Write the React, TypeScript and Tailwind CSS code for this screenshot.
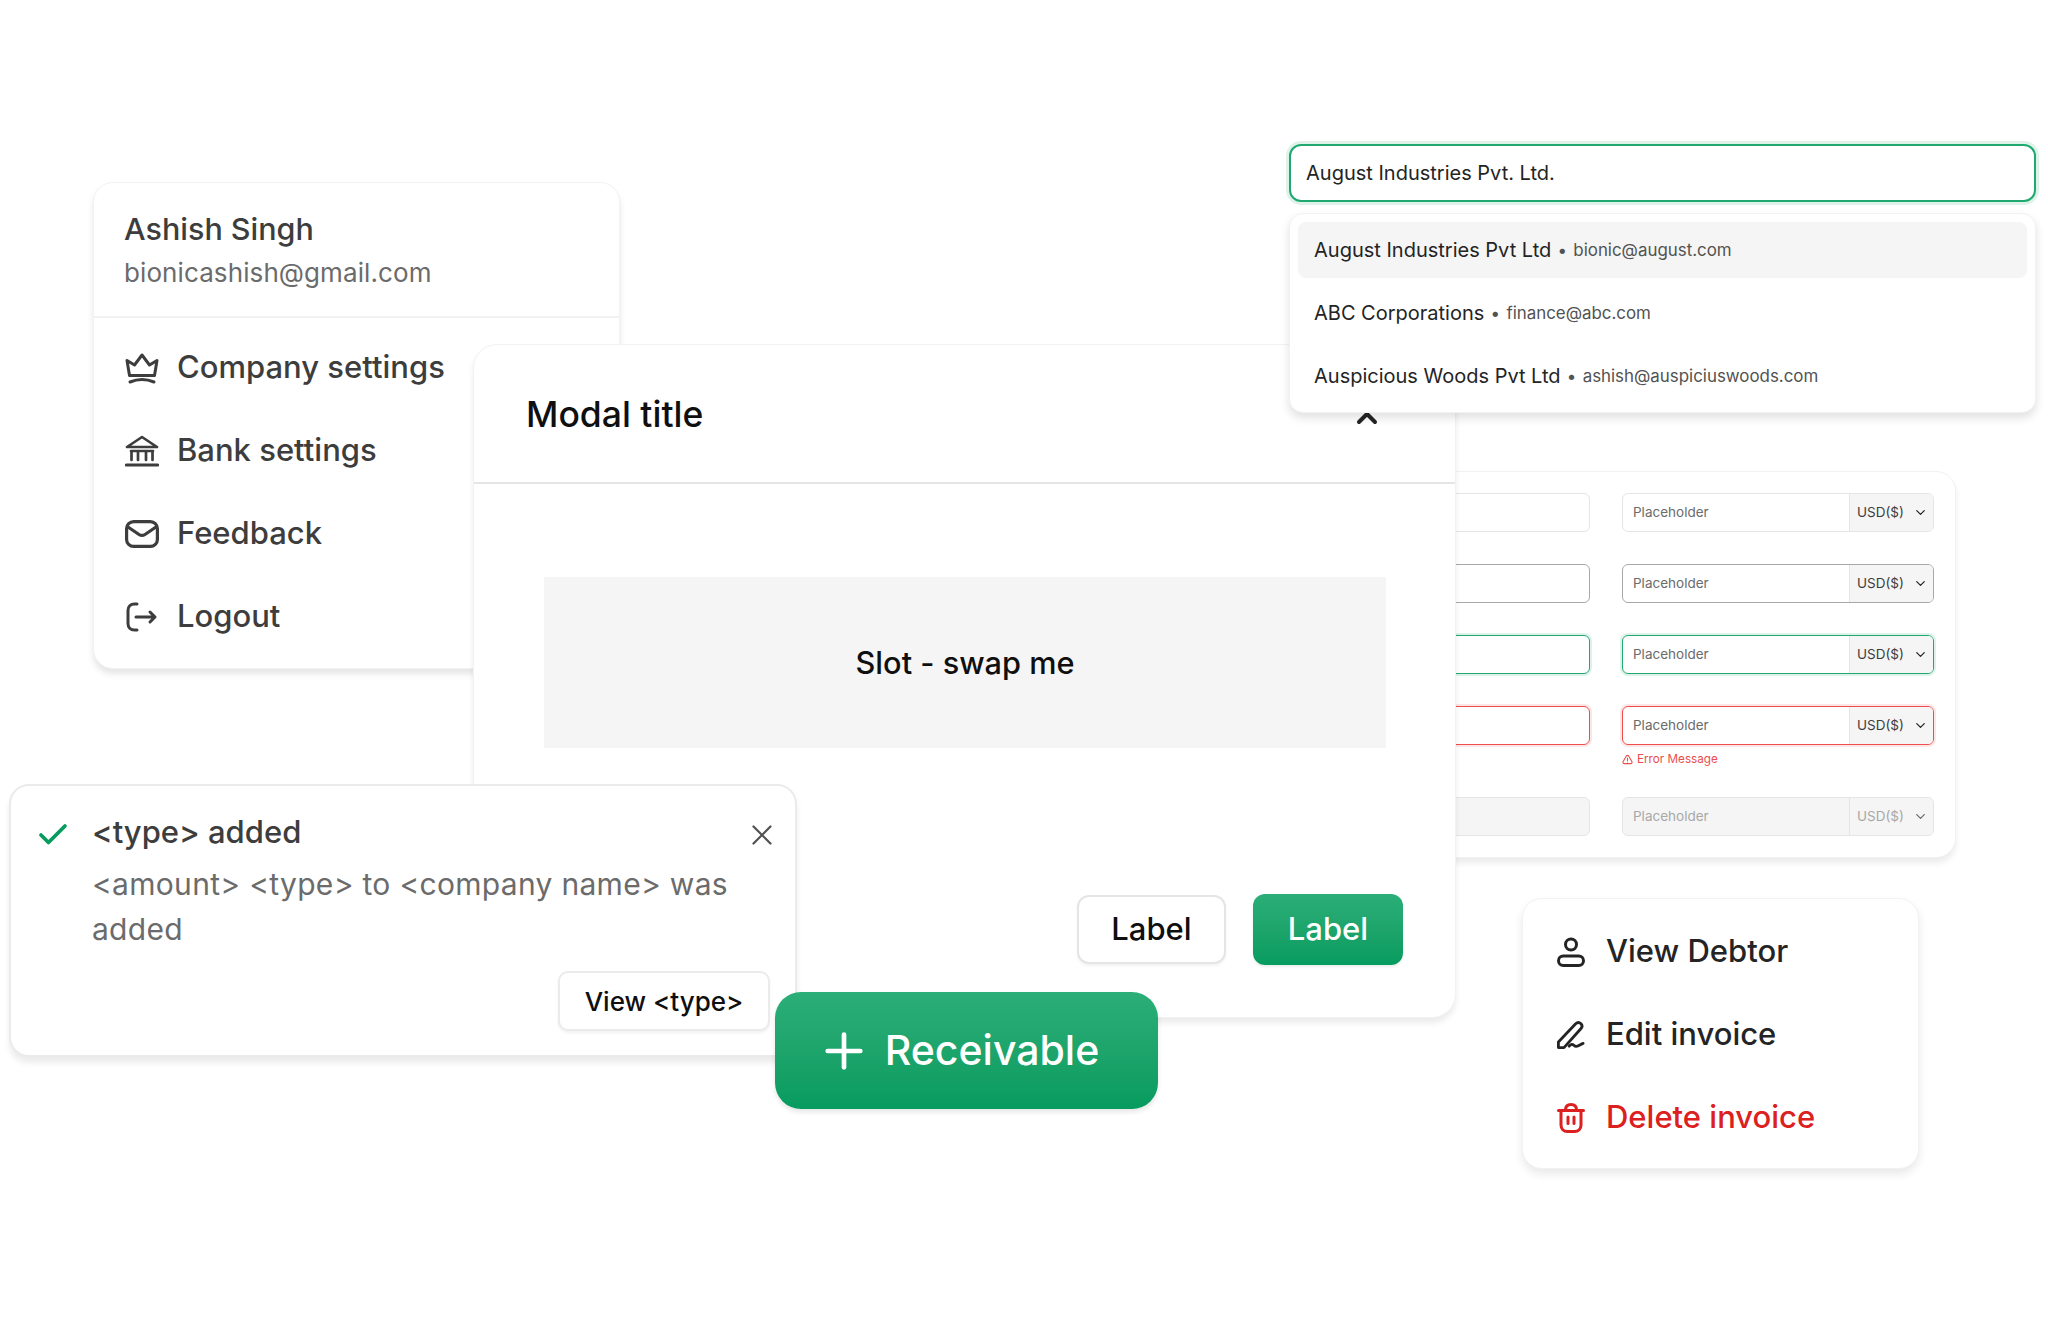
import { X, Plus, Check, ChevronDown, ChevronUp } from "lucide-react";

type FieldState = "idle" | "hover" | "focus" | "error" | "disabled";

const fieldBorder: Record<FieldState, string> = {
  idle: "border-[#e5e5e5]",
  hover: "border-[#a8a8a8]",
  focus: "border-[#1fa971] shadow-[0_0_0_2px_rgba(31,169,113,0.15)]",
  error: "border-[#ec4e4e] shadow-[0_0_0_2px_rgba(236,78,78,0.15)]",
  disabled: "border-[#e5e5e5] bg-[#f5f5f5]",
};

const fieldRows: FieldState[] = ["idle", "hover", "focus", "error", "disabled"];

function CrownIcon() {
  return (
    <svg width="34" height="32" viewBox="0 0 34 32" fill="none" stroke="#3d3d3d" strokeWidth="3" strokeLinejoin="round" strokeLinecap="round">
      <path d="M2 8.500 9.500 13 17 3l7.500 10L32 8.500 29.500 23.500h-25L2 8.500Z" />
      <path d="M5 30c7.500-3.200 16.500-3.200 24 0" />
    </svg>
  );
}

function BankIcon() {
  return (
    <svg width="34" height="32" viewBox="0 0 34 32" fill="none" stroke="#3d3d3d" strokeWidth="2.700" strokeLinecap="round" strokeLinejoin="round">
      <path d="M2 12 17 2l15 10H2Z" />
      <path d="M6 16h22" />
      <path d="M6.500 17v8M13 17v8M21 17v8M27.500 17v8" />
      <path d="M1.500 30h31" strokeWidth="3.200" />
    </svg>
  );
}

function MailIcon() {
  return (
    <svg width="34" height="28" viewBox="0 0 34 28" fill="none" stroke="#3d3d3d" strokeWidth="3.200" strokeLinecap="round" strokeLinejoin="round">
      <rect x="1.600" y="1.600" width="30.800" height="24.800" rx="7" />
      <path d="m3 7 11 7.500c2 1.300 4 1.300 6 0L31 7" />
    </svg>
  );
}

function LogoutIcon() {
  return (
    <svg width="34" height="30" viewBox="0 0 34 30" fill="none" stroke="#3d3d3d" strokeWidth="3" strokeLinecap="round" strokeLinejoin="round">
      <path d="M12 2H9.500C5.400 2 3 4.600 3 8.500v13C3 25.400 5.400 28 9.500 28H12" />
      <path d="M11 15h19M25 10l5 5-5 5" />
    </svg>
  );
}

function UserIcon() {
  return (
    <svg width="28" height="30" viewBox="0 0 28 30" fill="none" stroke="#242424" strokeWidth="3">
      <circle cx="14" cy="7.500" r="5.500" />
      <rect x="1.500" y="19" width="25" height="9.500" rx="4.750" />
    </svg>
  );
}

function PenIcon() {
  return (
    <svg width="30" height="30" viewBox="0 0 30 30" fill="none" stroke="#242424" strokeWidth="3" strokeLinecap="round" strokeLinejoin="round">
      <path d="M1.500 28.500v-6L20 3c1.700-1.700 4-1.700 5.500-.2 1.600 1.600 1.600 3.900 0 5.500L7.500 28.500h-6Z" />
      <path d="M13 27c2-2.500 3.500-2.500 5-1s3 1.500 5 .5 3.500-2 5-2.500" />
    </svg>
  );
}

function TrashIcon() {
  return (
    <svg width="28" height="30" viewBox="0 0 28 30" fill="none" stroke="#dc2020" strokeWidth="3" strokeLinecap="round" strokeLinejoin="round">
      <path d="M1.500 7.500h25" />
      <path d="M8.500 7c0-3.500 2-5.500 5.500-5.500s5.500 2 5.500 5.500" />
      <path d="M4 8v14c0 4 2.500 6.500 6.500 6.500h7c4 0 6.500-2.500 6.500-6.500V8" />
      <path d="M11 14v6.500M17 14v6.500" />
    </svg>
  );
}

function AlertIcon() {
  return (
    <svg width="11" height="11" viewBox="0 0 24 24" fill="none" stroke="#ec4e4e" strokeWidth="2.400" strokeLinecap="round" strokeLinejoin="round">
      <path d="M9.500 4.500c1.200-2 3.800-2 5 0l7 12c1.200 2-.2 4.500-2.500 4.500H5c-2.300 0-3.700-2.500-2.500-4.500l7-12Z" />
      <path d="M12 9v5M12 17.500v.1" />
    </svg>
  );
}

function PlainField({ state }: { state: FieldState }) {
  return <div className={`h-[39px] w-[270px] rounded-[6px] border-[1.5px] ${fieldBorder[state]}`} />;
}

function CurrencyField({ state }: { state: FieldState }) {
  const disabled = state === "disabled";
  return (
    <div className={`flex h-[39px] w-[312px] overflow-hidden rounded-[6px] border-[1.5px] ${fieldBorder[state]}`}>
      <div className={`flex flex-1 items-center pl-[10px] text-[13.500px] ${disabled ? "text-[#a8a8a8]" : "text-[#6b6b6b]"}`}>
        Placeholder
      </div>
      <div className={`flex w-[84px] items-center justify-between border-l border-[#e5e5e5] bg-[#f5f5f5] pl-[7px] pr-[5px] text-[13.500px] ${disabled ? "text-[#a8a8a8]" : "text-[#3d3d3d]"}`}>
        USD($)
        <ChevronDown size={15} strokeWidth={2} className={disabled ? "text-[#6b6b6b]" : "text-[#242424]"} />
      </div>
    </div>
  );
}

function ProfileMenu() {
  const items = [
    { label: "Company settings", icon: <CrownIcon /> },
    { label: "Bank settings", icon: <BankIcon /> },
    { label: "Feedback", icon: <MailIcon /> },
    { label: "Logout", icon: <LogoutIcon /> },
  ];
  return (
    <div className="absolute left-[93px] top-[182px] h-[487px] w-[527px] rounded-[20px] border border-[#f2f2f2] bg-white text-[#3d3d3d] shadow-[0_5px_6px_rgba(0,0,0,0.1)]">
      <div className="h-[135px] border-b-2 border-[#f2f2f2] pl-[30px] pt-[25px]">
        <div className="text-[30.500px] font-medium leading-[42px]">Ashish Singh</div>
        <div className="mt-[2px] text-[26px] leading-[42px] tracking-[0.1px] text-[#6b6b6b]">bionicashish@gmail.com</div>
      </div>
      <div className="flex flex-col pl-[31px] pt-[8px]">
        {items.map((item) => (
          <div key={item.label} className="flex h-[83px] items-center gap-[18px] text-[31px] font-medium">
            <div className="flex w-[34px] justify-center">{item.icon}</div>
            <span className="whitespace-nowrap">{item.label}</span>
          </div>
        ))}
      </div>
    </div>
  );
}

function FieldsPanel() {
  return (
    <div className="absolute left-[1300px] top-[471px] h-[387px] w-[656px] rounded-[20px] border border-[#f2f2f2] bg-white pl-[19px] pt-[21px] shadow-[0_5px_6px_rgba(0,0,0,0.08)]">
      {fieldRows.map((state) => (
        <div key={state} className={state === "error" ? "mb-[52px] flex gap-[32px]" : "mb-[32px] flex gap-[32px]"}>
          <PlainField state={state} />
          <div className="relative">
            <CurrencyField state={state} />
            {state === "error" && (
              <div className="absolute left-0 top-[45px] flex items-center gap-[4px] whitespace-nowrap text-[11.700px] text-[#ec4e4e]">
                <AlertIcon />
                Error Message
              </div>
            )}
          </div>
        </div>
      ))}
    </div>
  );
}

function Modal() {
  return (
    <div className="absolute left-[473px] top-[344px] h-[674px] w-[983px] rounded-[24px] border border-[#f2f2f2] bg-white shadow-[0_5px_6px_rgba(0,0,0,0.08)]">
      <div className="flex h-[139px] items-center justify-between border-b-2 border-[#e5e5e5] pl-[52px] pr-[72px] text-[#0f0f0f]">
        <span className="mt-[2px] text-[35.500px] font-medium">Modal title</span>
        <ChevronUp size={32} strokeWidth={3} className="mt-[8px] text-[#242424]" />
      </div>
      <div className="mx-[70px] mt-[93px] flex h-[171px] w-[842px] items-center justify-center bg-[#f5f5f5] pt-[2px] text-[30.700px] font-medium text-[#0f0f0f]">
        Slot - swap me
      </div>
      <div className="mr-[52px] mt-[146px] flex items-center justify-end gap-[27px] text-[31px] font-medium">
        <button className="h-[69px] w-[149px] rounded-[12px] border-2 border-[#e5e5e5] bg-white text-[#0f0f0f] shadow-[0_2px_3px_rgba(0,0,0,0.05)]">
          Label
        </button>
        <button className="h-[71px] w-[150px] rounded-[12px] bg-gradient-to-b from-[#2bae78] to-[#069b5f] text-white shadow-[0_2px_3px_rgba(0,0,0,0.08)]">
          Label
        </button>
      </div>
    </div>
  );
}

function CompanySearch() {
  const options = [
    { name: "August Industries Pvt Ltd", email: "bionic@august.com", active: true },
    { name: "ABC Corporations", email: "finance@abc.com", active: false },
    { name: "Auspicious Woods Pvt Ltd", email: "ashish@auspiciuswoods.com", active: false },
  ];
  return (
    <div className="absolute left-[1289px] top-[144px] w-[747px]">
      <div className="flex h-[58px] items-center rounded-[12px] border-2 border-[#1fa971] bg-white pl-[15px] text-[20px] text-[#242424] shadow-[0_0_0_3px_rgba(31,169,113,0.15)]">
        August Industries Pvt. Ltd.
      </div>
      <div className="mt-[11px] flex h-[200px] flex-col gap-[7px] rounded-[14px] border border-[#f2f2f2] bg-white p-[8px] shadow-[0_5px_10px_rgba(0,0,0,0.12)]">
        {options.map((o) => (
          <div key={o.name} className={`flex h-[56px] shrink-0 items-center rounded-[8px] pl-[16px] ${o.active ? "bg-[#f5f5f5]" : ""}`}>
            <span className="text-[20px] text-[#242424]">{o.name}</span>
            <span className="mx-[7px] mt-[2px] text-[17px] font-bold text-[#525252]">•</span>
            <span className="mt-[2px] text-[16.900px] text-[#525252]">{o.email}</span>
          </div>
        ))}
      </div>
    </div>
  );
}

function Toast() {
  return (
    <div className="absolute left-[9px] top-[784px] h-[273px] w-[788px] rounded-[20px] border-2 border-[#ebebeb] bg-white shadow-[0_6px_6px_rgba(0,0,0,0.08)]">
      <div className="flex items-start pl-[24px] pr-[16px] pt-[23px]">
        <Check size={36} strokeWidth={2.500} className="mt-[8px] text-[#069b5f]" />
        <div className="ml-[21px] w-[645px]">
          <div className="text-[31px] font-medium leading-[46px] text-[#3d3d3d]">{"<type> added"}</div>
          <div className="mt-[7px] text-[30px] leading-[45px] tracking-[0.3px] text-[#6b6b6b]">
            {"<amount> <type> to <company name> was added"}
          </div>
        </div>
        <X size={34} strokeWidth={1.600} className="ml-[9px] mt-[9px] text-[#525252]" />
      </div>
      <div className="mr-[25px] mt-[19px] flex justify-end">
        <button className="h-[60px] w-[212px] rounded-[10px] border-2 border-[#ebebeb] bg-white text-[26px] font-medium text-[#0f0f0f] shadow-[0_2px_3px_rgba(0,0,0,0.06)]">
          {"View <type>"}
        </button>
      </div>
    </div>
  );
}

function ReceivableButton() {
  return (
    <button className="absolute left-[775px] top-[992px] flex h-[117px] w-[383px] items-center justify-center gap-[13px] rounded-[26px] bg-gradient-to-b from-[#2bae78] to-[#069b5f] pr-[18px] text-[41px] font-medium text-white shadow-[0_3px_5px_rgba(0,0,0,0.1)]">
      <Plus size={56} strokeWidth={2} />
      Receivable
    </button>
  );
}

function InvoiceMenu() {
  const items = [
    { label: "View Debtor", icon: <UserIcon />, color: "text-[#242424]" },
    { label: "Edit invoice", icon: <PenIcon />, color: "text-[#242424]" },
    { label: "Delete invoice", icon: <TrashIcon />, color: "text-[#dc2020]" },
  ];
  return (
    <div className="absolute left-[1522px] top-[898px] flex h-[271px] w-[397px] flex-col rounded-[20px] border border-[#f2f2f2] bg-white pl-[34px] pt-[11px] shadow-[0_5px_10px_rgba(0,0,0,0.09)]">
      {items.map((item) => (
        <div key={item.label} className={`flex h-[83px] items-center gap-[21px] text-[31px] font-medium ${item.color}`}>
          <div className="flex w-[28px] justify-center">{item.icon}</div>
          <span>{item.label}</span>
        </div>
      ))}
    </div>
  );
}

export default function App() {
  return (
    <div className="relative h-[1331px] w-[2048px] overflow-hidden bg-white font-['Inter',sans-serif]">
      <ProfileMenu />
      <FieldsPanel />
      <Modal />
      <CompanySearch />
      <Toast />
      <ReceivableButton />
      <InvoiceMenu />
    </div>
  );
}
